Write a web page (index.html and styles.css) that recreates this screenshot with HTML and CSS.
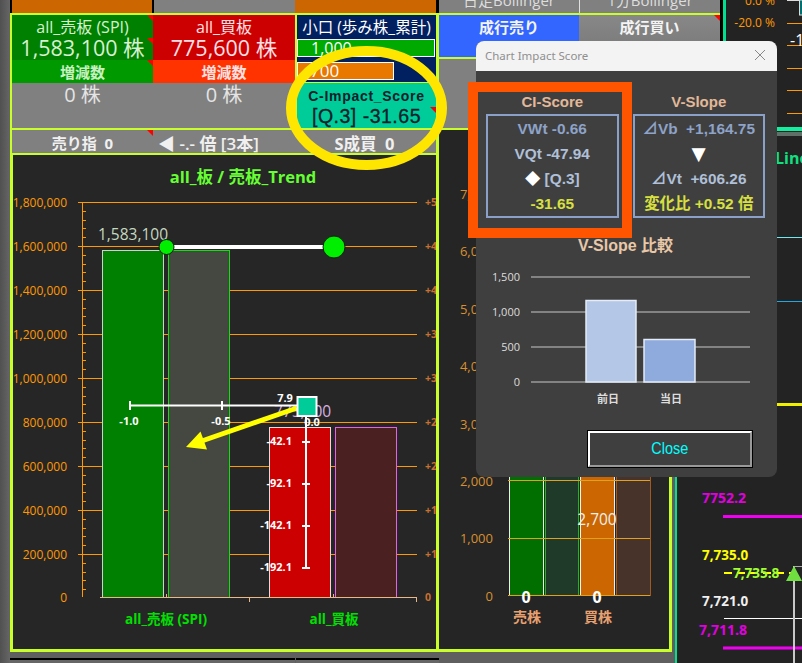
FILE: index.html
```html
<!DOCTYPE html>
<html lang="ja">
<head>
<meta charset="utf-8">
<title>Chart Impact Score</title>
<link rel="stylesheet" href="styles.css">
</head>
<body>
<div class="page">
  <div class="gutter"></div>

  <section class="left">
    <div class="strip">
      <div class="s-orange s-a"></div>
      <div class="s-gray s-b"></div>
      <div class="s-orange s-c"></div>
    </div>
    <div class="cards">
      <div class="card">
        <div class="c-name sell-a flag">all_売板 (SPI)</div>
        <div class="c-val sell-a flag">1,583,100 株</div>
        <div class="c-delta sell-b flag">増減数</div>
        <div class="c-rest">0 株</div>
      </div>
      <div class="card">
        <div class="c-name buy-a">all_買板</div>
        <div class="c-val buy-a">775,600 株</div>
        <div class="c-delta buy-b">増減数</div>
        <div class="c-rest">0 株</div>
      </div>
      <div class="card small">
        <div class="sm-title">小口 (歩み株_累計)</div>
        <div class="sm-bar sm-green">1,000</div>
        <div class="sm-bar sm-orange">700</div>
        <div class="score flag-low">
          <div class="score-a">C-Impact_Score</div>
          <div class="score-b">[Q.3] -31.65</div>
        </div>
      </div>
    </div>
    <div class="stat">
      <div class="st st-a flag">売り指&nbsp; 0</div>
      <div class="st st-b">◀ -.- 倍 [3本]</div>
      <div class="st st-c">S成買&nbsp; 0</div>
    </div>
    <div class="panel">
      <svg class="chart-a" viewBox="13 155 423 494" width="423" height="494">
        <text class="title-g" x="243" y="183" text-anchor="middle">all_板 / 売板_Trend</text>
        <g class="grid">
          <path d="M78 202H417M78 246H417M78 290H417M78 334H417M78 378H417M78 422H417M78 466H417M78 510H417M78 554H417"/>
          <path d="M82 202V597M82 211H86M82 220H86M82 228H86M82 237H86M82 255H86M82 264H86M82 272H86M82 281H86M82 299H86M82 308H86M82 316H86M82 325H86M82 343H86M82 352H86M82 360H86M82 369H86M82 387H86M82 396H86M82 404H86M82 413H86M82 431H86M82 440H86M82 448H86M82 457H86M82 475H86M82 484H86M82 492H86M82 501H86M82 519H86M82 528H86M82 536H86M82 545H86M82 563H86M82 572H86M82 580H86M82 589H86"/>
        </g>
        <g class="lab-o">
          <text x="67" y="207">1,800,000</text><text x="67" y="251">1,600,000</text>
          <text x="67" y="295">1,400,000</text><text x="67" y="339">1,200,000</text>
          <text x="67" y="383">1,000,000</text><text x="67" y="427">800,000</text>
          <text x="67" y="471">600,000</text><text x="67" y="515">400,000</text>
          <text x="67" y="559">200,000</text><text x="67" y="602">0</text>
        </g>
        <g class="lab-r">
          <text x="425" y="206">+5</text><text x="425" y="250">+4</text><text x="425" y="294">+4</text>
          <text x="425" y="338">+3</text><text x="425" y="382">+3</text><text x="425" y="426">+2</text>
          <text x="425" y="470">+2</text><text x="425" y="514">+1</text><text x="425" y="558">+1</text>
          <text x="425" y="601">0</text>
        </g>
        <rect class="b-sell" x="102.500" y="250.500" width="61" height="347"/>
        <rect class="b-sell2" x="168.500" y="250.500" width="61" height="347"/>
        <rect class="b-buy" x="269.500" y="427.500" width="61" height="170"/>
        <rect class="b-buy2" x="335.500" y="427.500" width="61" height="170"/>
        <path class="axis" d="M100 597.500H416M249.500 597V602M416.500 597V602M166.500 594V597M333.500 594V597"/>
        <text class="big-g" x="98" y="240">1,583,100</text>
        <text class="big-p" x="274" y="417">775,600</text>
        <path class="w4" d="M166 247H323"/>
        <circle class="dot" cx="166.500" cy="247" r="7.500"/>
        <circle class="dot" cx="334" cy="247" r="11"/>
        <path class="w2" d="M130 405.500H300M130 401V410M222 401V410M306 406V568M302 442H310M302 484H310M302 526H310M302 568H310"/>
        <g class="tiny">
          <text x="129" y="425" text-anchor="middle">-1.0</text>
          <text x="221" y="425" text-anchor="middle">-0.5</text>
          <text x="312" y="426" text-anchor="middle">0.0</text>
          <text x="285" y="402" text-anchor="middle">7.9</text>
          <text x="292" y="445" text-anchor="end">-42.1</text>
          <text x="292" y="487" text-anchor="end">-92.1</text>
          <text x="292" y="529" text-anchor="end">-142.1</text>
          <text x="292" y="571" text-anchor="end">-192.1</text>
        </g>
        <path class="arrow-l" d="M297 408L196 443"/>
        <path class="arrow-h" d="M186 447L200.500 431.500L207 449.500Z"/>
        <rect class="mark" x="297.500" y="397" width="19" height="19"/>
        <text class="cat" x="166" y="624" text-anchor="middle">all_売板 (SPI)</text>
        <text class="cat" x="334" y="624" text-anchor="middle">all_買板</text>
      </svg>
    </div>
    <div class="foot">
      <div class="foot-cell f-a"></div>
      <div class="foot-cell f-b"></div>
    </div>
  </section>

  <section class="mid">
    <div class="upper">
      <div class="ctrl">
        <div class="boll">
          <div class="boll-c">日足Bollinger</div>
          <div class="boll-c boll-r">1分Bollinger</div>
        </div>
        <div class="orders">
          <div class="ord ord-blue">成行売り</div>
          <div class="ord ord-gray flag">成行買い</div>
        </div>
        <div class="ctrl-rest"></div>
      </div>
      <div class="tall-line"></div>
      <svg class="top-right" viewBox="726 0 76 128" width="76" height="128">
        <text class="pct" x="775" y="5" text-anchor="end">0.0 %</text>
        <text class="pct" x="775" y="27" text-anchor="end">-20.0 %</text>
        <path class="grid" d="M787 23.500H802M787 45.500H802M787 68.500H802M787 90.500H802M787 113.500H802"/>
        <path class="wbox" d="M787 .5H799"/>
        <rect class="tealbox" x="799.500" y="0" width="4" height="15"/>
        <text class="neg" x="790" y="46">-1</text>
        <rect class="teal-f" x="777" y="127" width="25" height="1"/>
      </svg>
    </div>
    <div class="lower">
      <div class="panel2">
        <svg class="chart-b" viewBox="439 130 230 519" width="230" height="519">
          <g class="lab-b">
            <text x="493" y="199">7,000</text><text x="493" y="256">6,000</text><text x="493" y="314">5,000</text>
            <text x="493" y="371">4,000</text><text x="493" y="429">3,000</text><text x="493" y="486">2,000</text>
            <text x="493" y="543">1,000</text><text x="493" y="601">0</text>
          </g>
          <rect class="p-g" x="509.500" y="470" width="34" height="125.500"/>
          <rect class="p-dg" x="545.500" y="470" width="33" height="125.500"/>
          <rect class="p-o" x="580.500" y="470" width="34" height="125.500"/>
          <rect class="p-br" x="616.500" y="470" width="34" height="125.500"/>
          <path class="gridb" d="M508 480.500H650M508 538.500H650M508 595.500H650"/>
          <text class="v27" x="597" y="525" text-anchor="middle">2,700</text>
          <text class="v0" x="526" y="603" text-anchor="middle">0</text>
          <text class="v0" x="597" y="603" text-anchor="middle">0</text>
          <text class="catb" x="527" y="622" text-anchor="middle">売株</text>
          <text class="catb" x="598" y="622" text-anchor="middle">買株</text>
        </svg>
      </div>
      <div class="gap3"></div>
      <div class="tall-line2"></div>
      <svg class="pane" viewBox="677 128 125 535" width="125" height="535">
        <rect class="teal-f" x="677" y="128" width="125" height="3"/>
        <rect class="pink-f" x="677" y="132" width="125" height="4"/>
        <text class="line-t" x="775" y="164">Line</text>
        <path class="l-cy" d="M777 237.500H802"/>
        <path class="l-bl" d="M777 301.500H802"/>
        <path class="l-ye" d="M777 404.500H802"/>
        <path class="l-mg" d="M723 516.500H802M723 648H802"/>
        <path class="l-wh" d="M724 618.500H802"/>
        <path class="l-vert" d="M794 566V663"/>
        <path class="l-top" d="M794 566.500H802"/>
        <path class="l-dash" d="M724 573H802"/>
        <text class="pr pr-m" x="702" y="503">7752.2</text>
        <text class="pr pr-y" x="702" y="560">7,735.0</text>
        <text class="pr pr-g" x="733" y="578">7,735.8</text>
        <text class="pr pr-w" x="702" y="606">7,721.0</text>
        <text class="pr pr-m" x="699" y="635">7,711.8</text>
        <path class="tri-g" d="M794 566L786 581H802Z"/>
      </svg>
    </div>
  </section>

  <svg class="ring" viewBox="0 0 802 663" width="802" height="663">
    <ellipse cx="366.500" cy="108" rx="75.500" ry="57"/>
  </svg>

  <div class="dialog">
    <header class="d-head">
      <span class="d-title">Chart Impact Score</span>
      <svg class="d-x" viewBox="0 0 12 12" width="12" height="12"><path d="M1 1L11 11M11 1L1 11"/></svg>
    </header>
    <div class="d-body">
      <div class="d-cols">
        <div class="d-col">
          <h3 class="d-h">CI-Score</h3>
          <div class="d-box">
            <div class="r c-blue">VWt -0.66</div>
            <div class="r c-pale">VQt -47.94</div>
            <div class="r c-pale"><span class="w">◆</span> [Q.3]</div>
            <div class="r c-yel">-31.65</div>
          </div>
        </div>
        <div class="d-col">
          <h3 class="d-h">V-Slope</h3>
          <div class="d-box">
            <div class="r c-blue">⊿Vb&nbsp; +1,164.75</div>
            <div class="r w big-tri">▼</div>
            <div class="r c-pale">⊿Vt&nbsp; +606.26</div>
            <div class="r c-yel">変化比 +0.52 倍</div>
          </div>
        </div>
      </div>
      <h3 class="d-h d-h2">V-Slope 比較</h3>
      <svg class="mini" viewBox="486 262 279 148" width="279" height="148">
        <path class="m-grid" d="M531 277H750M531 312H750M531 347H750M531 382H750"/>
        <rect class="m-a" x="586" y="300.500" width="50" height="81.500"/>
        <rect class="m-b" x="644" y="339.500" width="51" height="42.500"/>
        <g class="m-lab">
          <text x="520" y="281">1,500</text><text x="520" y="316">1,000</text>
          <text x="520" y="351">500</text><text x="520" y="386">0</text>
        </g>
        <text class="m-x" x="608" y="403" text-anchor="middle">前日</text>
        <text class="m-x" x="671" y="403" text-anchor="middle">当日</text>
      </svg>
      <button class="close" type="button"><span class="close-t">Close</span></button>
    </div>
  </div>

  <div class="frame"></div>
</div>
</body>
</html>
```

FILE: styles.css
```css
* { box-sizing: border-box; margin: 0; padding: 0; }
html, body { width: 802px; height: 663px; overflow: hidden; }
body { background: #5f5f5f; font-family: "Open Sans", "Noto Sans CJK JP", sans-serif; }
svg { display: block; }
svg text { font-family: "Open Sans", "Noto Sans CJK JP", sans-serif; }

.page { position: relative; width: 802px; height: 663px; display: flex; overflow: hidden; }
.gutter { width: 10px; background: linear-gradient(90deg, #505050, #666); }

/* left column */
.left { width: 429px; display: flex; flex-direction: column; }
.strip { height: 13px; display: flex; background: #000; padding: 0 3px 0 2px; gap: 2px; }
.s-orange { background: #cc6600; }
.s-gray { background: #808080; }
.s-a { width: 140px; }
.s-b { width: 141px; margin-right: -2px; }
.s-c { width: 141px; }

.cards { height: 117px; display: flex; background: #808080; border: 2px solid #c8ff2a; border-right-width: 3px; }
.card { display: flex; flex-direction: column; width: 141px; }
.card + .card { width: 142px; }
.card.small { background: #002060; border-left: 2px solid #c8ff2a; width: 141px; }
.c-name, .c-val, .c-delta { display: flex; align-items: center; justify-content: center; position: relative; white-space: nowrap; }
.c-name { height: 23px; font-size: 16px; line-height: 18px; }
.c-val { height: 22px; font-size: 21.500px; line-height: 20px; padding-bottom: 2px; }
.c-delta { height: 23px; font-size: 15px; line-height: 18px; font-weight: 700; }
.sell-a { background: #008000; color: #d8f0d0; }
.sell-b { background: #009900; color: #c8f0c0; }
.buy-a { background: #cc0000; color: #ffe0e8; }
.buy-b { background: #ff3300; color: #ffe0e0; }
.c-rest { flex: 1; text-align: center; font-size: 20px; line-height: 24px; color: #e4e4e4; }

.flag::after, .flag-low::after {
  content: ""; position: absolute; right: 0; top: 0; width: 6px; height: 6px;
  background: #ff0000; clip-path: polygon(0 0, 100% 0, 100% 100%);
}
.flag-low { position: relative; }
.flag-low::after { top: 24px; right: 0; }

.sm-title { height: 24px; display: flex; align-items: center; justify-content: center; font-size: 15.500px; line-height: 18px; color: #fff; white-space: nowrap; }
.sm-bar { height: 18px; border: 1px solid #fff; font-size: 16px; line-height: 16px; color: #fff; }
.sm-green { background: #00aa00; padding-left: 13px; margin-bottom: 5px; margin-right: 1px; }
.sm-orange { background: #e87800; width: 97px; padding-left: 12px; font-size: 17px; }
.score { margin-top: 2px; border-top: 1px solid #c8ff2a; flex: 1; background: #00cc99; text-align: center; color: #06202c; font-family: "Liberation Sans", sans-serif; }
.score-a { font-size: 14px; font-weight: 700; line-height: 16px; margin-top: 5px; letter-spacing: .7px; }
.score-b { font-size: 19.500px; line-height: 24px; letter-spacing: .5px; font-weight: 400; -webkit-text-stroke: .3px #06202c; }

.stat { height: 23px; display: flex; align-items: center; background: #808080; border: solid #c8ff2a; border-width: 0 3px 0 2px; font-size: 15px; font-weight: 700; color: #f0f0f0; }
.st { height: 100%; padding-top: 2px; display: flex; align-items: center; justify-content: center; position: relative; }
.st-a { width: 141px; }
.st-b { width: 142px; font-size: 17px; font-weight: 600; justify-content: flex-start; padding-left: 5px; white-space: nowrap; }
.st-c { width: 139px; font-size: 16.500px; }

.panel { height: 499px; border: solid #c8ff2a; border-width: 2px 3px 3px; background: #262626; }
.foot { flex: 1; padding-top: 6px; display: flex; gap: 1px; }
.foot-cell { background: #666; border-top: 2px solid #000; }
.f-a { width: 285px; }
.f-b { flex: 1; }

.title-g { font-size: 16.500px; font-weight: 700; fill: #66ff33; }
.grid { fill: none; stroke: #ff9900; stroke-width: 1; shape-rendering: crispEdges; }
.lab-o text { font-size: 12px; fill: #ff9900; text-anchor: end; }
.lab-r text { font-size: 10.500px; font-weight: 700; fill: #c87030; }
.b-sell { fill: #008000; stroke: #d0d0d0; }
.b-sell2 { fill: #454840; stroke: #10e010; }
.b-buy { fill: #cc0000; stroke: #e0e0e0; }
.b-buy2 { fill: #4a2020; stroke: #e860e8; }
.axis { fill: none; stroke: #e8b888; }
.big-g { font-size: 15.500px; fill: #c4d8c0; }
.big-p { font-size: 15.500px; fill: #d8b0e0; }
.w4 { stroke: #fff; stroke-width: 4; fill: none; }
.dot { fill: #00ee00; stroke: #102010; stroke-width: 1; }
.w2 { stroke: #fff; stroke-width: 2; fill: none; }
.tiny text { font-size: 11px; font-weight: 700; fill: #fff; }
.arrow-l { stroke: #ffff00; stroke-width: 5; fill: none; }
.arrow-h { fill: #ffff00; }
.mark { fill: #00cc99; stroke: #fff; stroke-width: 2; }
.cat { font-size: 13.500px; font-weight: 700; fill: #00e000; }

/* middle + right */
.mid { flex: 1; display: flex; flex-direction: column; }
.upper { height: 128px; display: flex; background: #000; }
.ctrl { width: 281px; display: flex; flex-direction: column; background: #808080; }
.boll { height: 13px; display: flex; overflow: hidden; }
.boll-c { width: 140px; display: flex; align-items: flex-end; justify-content: center; padding-bottom: 5px; font-size: 15px; line-height: 16px; color: #ddd; }
.boll-r { border-left: 1px solid #e0e0e0; width: 141px; }
.orders { height: 46px; display: flex; border-top: 2px solid #c8ff2a; border-bottom: 2px solid #c8ff2a; }
.ord { width: 140px; height: 42px; padding-top: 1px; display: flex; justify-content: center; font-size: 15px; font-weight: 700; color: #f4f4f4; position: relative; line-height: 22px; }
.ord-blue { background: #3366ff; }
.ord-gray { width: 141px; background: linear-gradient(#888, #777); }
.ctrl-rest { flex: 1; }
.tall-line { width: 3px; margin-left: 3px; background: #00e090; }
.top-right { width: 76px; background: #232323; }
.pct { font-size: 12px; fill: #ff9900; }
.wbox { stroke: #ddd; }
.tealbox { fill: #007070; stroke: #ddd; }
.neg { font-size: 16px; fill: #fff; }
.teal-f { fill: #10f0a0; }
.pink-f { fill: #607068; }

.lower { flex: 1; display: flex; }
.panel2 { width: 233px; height: 524px; background: #252525; border: solid #c8ff2a; border-width: 2px 3px 3px 0; }
.gap3 { width: 3px; }
.tall-line2 { width: 2px; background: #00e090; }
.pane { width: 125px; background: #232323; }
.lab-b text { font-size: 13px; fill: #d89030; text-anchor: end; }
.p-g { fill: #006f00; stroke: #eee; }
.p-dg { fill: #203a2a; stroke: #10c010; }
.p-o { fill: #cc6600; stroke: #eee; }
.p-br { fill: #47332a; stroke: #a05a20; }
.gridb { fill: none; stroke: #e0a020; shape-rendering: crispEdges; }
.v27 { font-size: 15.500px; fill: #f0f0f0; }
.v0 { font-size: 16px; font-weight: 700; fill: #fff; }
.catb { font-size: 14px; font-weight: 700; fill: #e8a070; }
.line-t { font-size: 16px; font-weight: 700; fill: #10e080; }
.l-cy { stroke: #70e8f0; }
.l-bl { stroke: #20a8e0; }
.l-ye { stroke: #f0f000; stroke-width: 3; }
.l-mg { stroke: #f000f0; stroke-width: 3; }
.l-wh { stroke: #fff; }
.l-vert { stroke: #c8c8c8; stroke-width: 2; }
.l-top { stroke: #aaa; }
.l-dash { stroke: #ffff00; stroke-width: 2; stroke-dasharray: 8 5; }
.pr { font-size: 13.500px; font-weight: 700; }
.pr-m { fill: #e000e0; font-size: 14px; }
.pr-y { fill: #ffff00; }
.pr-g { fill: #a0ff30; }
.pr-w { fill: #f0f0f0; }
.tri-g { fill: #70e040; }

/* overlays */
.ring { position: absolute; left: 0; top: 0; pointer-events: none; fill: none; stroke: #ffe600; stroke-width: 10; }

.dialog { position: absolute; left: 476px; top: 41px; width: 301px; height: 436px; background: #3f3f3f; border-radius: 8px; overflow: hidden; display: flex; flex-direction: column; }
.d-head { height: 30px; flex: none; background: #f3f3f3; display: flex; align-items: center; justify-content: space-between; padding: 0 11px 2px 9px; }
.d-title { font-size: 11.500px; color: #8f8f8f; font-family: "Noto Sans", sans-serif; }
.d-x { fill: none; stroke: #888; stroke-width: 1; }
.d-body { flex: 1; padding: 0 12px 0 10px; display: flex; flex-direction: column; font-family: "Liberation Sans", "Noto Sans CJK JP", sans-serif; }
.d-cols { display: flex; gap: 14px; padding-top: 21px; }
.d-col { flex: 1; min-width: 0; }
.d-h { font-size: 15px; line-height: 20px; font-weight: 700; color: #e2b898; text-align: center; margin-bottom: 2px; }
.d-box { height: 104px; border: 2px solid #8aa0c8; display: flex; flex-direction: column; justify-content: space-around; }
.r { font-size: 15.400px; font-weight: 700; line-height: 24px; text-align: center; white-space: nowrap; }
.c-blue { color: #8ea3c8; }
.c-pale { color: #b0c0d8; }
.c-yel { color: #d8e040; }
.w { color: #fff; }
.big-tri { font-size: 24px; }
.d-h2 { margin: 18px 0 6px; font-size: 16px; color: #e8c8a8; }
.mini { flex: none; }
.m-grid { fill: none; stroke: #9a9a9a; stroke-width: 1.500; }
.m-a { fill: #b4c7e7; stroke: #e4ecf6; stroke-width: 1.500; }
.m-b { fill: #8faadc; stroke: #e4ecf6; stroke-width: 1.500; }
.m-lab text { font-size: 11px; fill: #ddd; text-anchor: end; }
.m-x { font-size: 11px; font-weight: 700; fill: #ddd; }
.close { align-self: flex-start; width: 164px; height: 36px; margin: 21px 0 0 102px; background: #3f3f3f; border: 2px solid; border-color: #fff #999 #999 #fff; outline: 1px solid #000; color: #00ffff; font-family: "Liberation Sans", sans-serif; font-size: 17px; }
.close-t { display: inline-block; transform: scaleX(.85); }

.frame { position: absolute; left: 468px; top: 82px; width: 164px; height: 156px; border: 10px solid #ff5500; }
```
